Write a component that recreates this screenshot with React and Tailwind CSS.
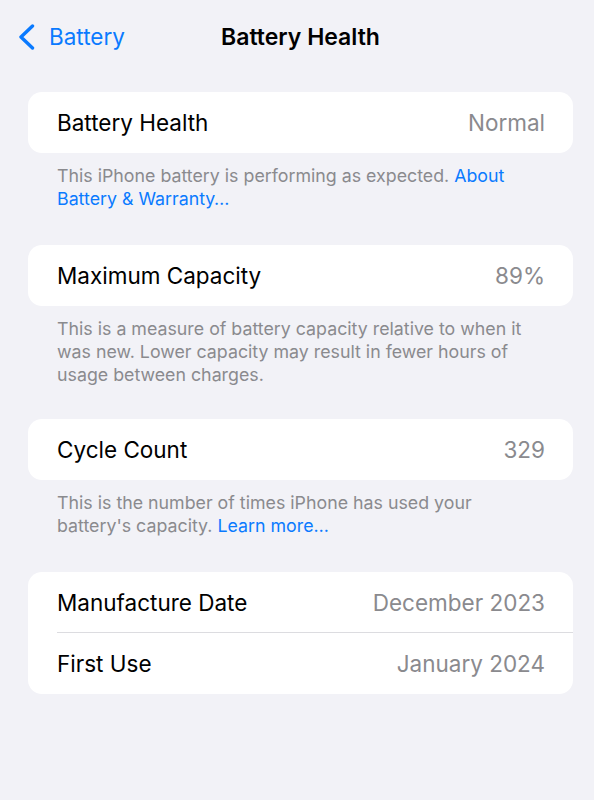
import React from "react";

const font = { fontFamily: "Inter, 'Noto Sans', sans-serif" };

const Row = ({ label, value, divider }) => (
  <div className="relative flex items-center justify-between h-[61px] pl-[29px] pr-[28px]">
    <span className="text-[22.5px] text-black">{label}</span>
    <span className="text-[22.5px] text-[#8a8a8e]">{value}</span>
    {divider && <div className="absolute bottom-0 left-[29px] right-0 h-px bg-[#dcdce0]"></div>}
  </div>
);

const Card = ({ children }) => (
  <div className="ml-[28px] mr-[21px] bg-white rounded-[14px] overflow-hidden">{children}</div>
);

const Footer = ({ children }) => (
  <p className="ml-[57px] mr-[62px] mt-[11px] text-[17.8px] leading-[23px] text-[#8a8a8e]">{children}</p>
);

export default function App() {
  return (
    <div className="min-h-[800px] w-full bg-[#f2f2f7]" style={font}>
      {/* Nav bar */}
      <div className="relative h-[74px] flex items-center">
        <div className="flex items-center pl-[18px] text-[#0a7aff]">
          <svg width="17" height="26" viewBox="0 0 17 26" fill="none">
            <path d="M14.5 2 L3 13 L14.5 24" stroke="#0a7aff" strokeWidth="3.4" strokeLinecap="round" strokeLinejoin="round" />
          </svg>
          <span className="ml-[14px] text-[22.5px]">Battery</span>
        </div>
        <div className="absolute left-0 right-0 top-0 h-[74px] flex items-center justify-center pl-[7px]">
          <span className="text-[23px] font-semibold text-black">Battery Health</span>
        </div>
      </div>

      <div className="pt-[18px]">
        <Card>
          <Row label="Battery Health" value="Normal" />
        </Card>
        <Footer>
          This iPhone battery is performing as expected.{" "}
          <span className="text-[#0a7aff]">About Battery &amp; Warranty…</span>
        </Footer>

        <div className="h-[35px]"></div>
        <Card>
          <Row label="Maximum Capacity" value="89%" />
        </Card>
        <Footer>
          This is a measure of battery capacity relative to when it was new. Lower capacity may result in fewer hours of usage between charges.
        </Footer>

        <div className="h-[33px]"></div>
        <Card>
          <Row label="Cycle Count" value="329" />
        </Card>
        <Footer>
          This is the number of times iPhone has used your battery's capacity.{" "}
          <span className="text-[#0a7aff]">Learn more…</span>
        </Footer>

        <div className="h-[35px]"></div>
        <Card>
          <Row label="Manufacture Date" value="December 2023" divider />
          <Row label="First Use" value="January 2024" />
        </Card>
      </div>
    </div>
  );
}
